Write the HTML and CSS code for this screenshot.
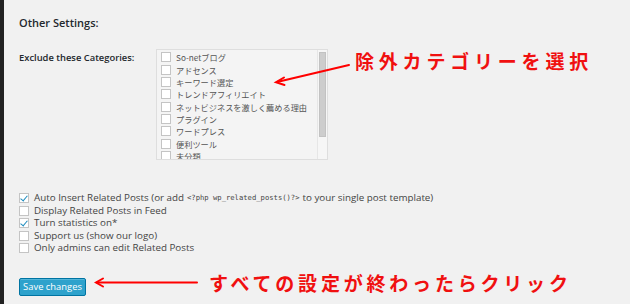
FILE: index.html
```html
<!DOCTYPE html>
<html lang="ja">
<head>
<meta charset="utf-8">
<link rel="stylesheet" href="styles.css">
</head>
<body>
<div class="page">
  <h3 class="title">Other Settings:</h3>
  <div class="row">
    <div class="label">Exclude these Categories:</div>
    <div class="catbox">
      <ul class="cats">
        <li><span class="cb"></span>So-netブログ</li>
        <li><span class="cb"></span>アドセンス</li>
        <li><span class="cb"></span>キーワード選定</li>
        <li><span class="cb"></span>トレンドアフィリエイト</li>
        <li><span class="cb"></span>ネットビジネスを激しく薦める理由</li>
        <li><span class="cb"></span>プラグイン</li>
        <li><span class="cb"></span>ワードプレス</li>
        <li><span class="cb"></span>便利ツール</li>
        <li><span class="cb"></span>未分類</li>
      </ul>
      <div class="scroll"><div class="thumb"></div></div>
    </div>
  </div>
  <ul class="opts">
    <li><span class="cb on"></span>Auto Insert Related Posts (or add <code>&lt;?php wp_related_posts()?&gt;</code> to your single post template)</li>
    <li><span class="cb"></span>Display Related Posts in Feed</li>
    <li><span class="cb on"></span>Turn statistics on*</li>
    <li><span class="cb"></span>Support us (show our logo)</li>
    <li><span class="cb"></span>Only admins can edit Related Posts</li>
  </ul>
  <button class="save">Save changes</button>

  <div class="note note1">除外カテゴリーを選択</div>
  <div class="note note2">すべての設定が終わったらクリック</div>
  <svg class="arrows" width="630" height="304" viewBox="0 0 630 304">
    <g stroke="#f00" stroke-width="2" fill="none" stroke-linecap="round">
      <line x1="349" y1="65" x2="277" y2="82"/>
      <polyline points="284,77.5 276,82.3 284.5,85"/>
      <line x1="197" y1="282.5" x2="97" y2="282.5"/>
      <polyline points="103,278.5 96,282.5 103,286.5"/>
    </g>
  </svg>
</div>
</body>
</html>
```
FILE: styles.css
```css
html, body {
  margin: 0;
  padding: 0;
}
body {
  background: #f1f1f1;
  font-family: "Open Sans", "Noto Sans CJK JP", sans-serif;
  color: #444;
}
.page {
  position: relative;
  width: 626px;
  height: 304px;
  border-left: 4px solid #222;
  padding-left: 15px;
  box-sizing: border-box;
  overflow: hidden;
}
.title {
  margin: 0;
  padding-top: 15px;
  font-size: 11px;
  line-height: 16px;
  font-weight: 600;
  color: #23282d;
}
.row {
  display: flex;
  margin-top: 18px;
}
.label {
  width: 137px;
  font-size: 9.4px;
  font-weight: 600;
  line-height: 14px;
  padding-top: 2px;
  color: #23282d;
}
.catbox {
  display: flex;
  width: 172px;
  height: 111px;
  box-sizing: border-box;
  border: 1px solid #dedede;
  background: #f4f4f4;
  overflow: hidden;
}
.cats {
  list-style: none;
  margin: 0;
  padding: 1px 0 0 4px;
  flex: 1;
  min-width: 0;
}
.cats li {
  display: flex;
  align-items: center;
  height: 12.35px;
  line-height: 12px;
  font-family: "Noto Sans CJK JP", sans-serif;
  font-size: 8.2px;
  color: #555;
  white-space: nowrap;
}
.cb {
  display: inline-block;
  flex: none;
  width: 10px;
  height: 10px;
  box-sizing: border-box;
  border: 1px solid #c4c4c4;
  background: #fff;
  margin-right: 5px;
  position: relative;
}
.cb.on::after {
  content: "";
  position: absolute;
  left: 2px;
  top: 0px;
  width: 3px;
  height: 6px;
  border-right: 1.6px solid #1e8cbe;
  border-bottom: 1.6px solid #1e8cbe;
  transform: rotate(40deg);
}
.scroll {
  width: 10px;
  flex: none;
  border-left: 1px solid #e6e6e6;
  background: #f6f6f6;
  padding: 2px 1px 0 1px;
  box-sizing: border-box;
}
.thumb {
  height: 85px;
  background: #cdcdcd;
  border: 1px solid #c2c2c2;
  box-sizing: border-box;
}
.opts {
  list-style: none;
  margin: 32px 0 0 0;
  padding: 0;
}
.opts li {
  display: flex;
  align-items: center;
  height: 12.5px;
  line-height: 12px;
  font-size: 9.8px;
  color: #444;
  white-space: nowrap;
}
.opts code {
  font-family: "DejaVu Sans Mono", monospace;
  font-size: 7.2px;
  margin: 0 3px;
  color: #444;
}
.save {
  display: block;
  margin-top: 23px;
  width: 67px;
  height: 18px;
  padding: 0;
  border: 1px solid #0074a2;
  border-radius: 2px;
  background: #2ea2cc;
  box-shadow: inset 0 1px 0 rgba(120, 200, 230, 0.5);
  color: #fff;
  font-family: "Open Sans", sans-serif;
  font-size: 9.4px;
  line-height: 16px;
}
.note {
  position: absolute;
  color: #f01010;
  font-family: "Noto Sans CJK JP", sans-serif;
  font-weight: 700;
  font-size: 19px;
  line-height: 22px;
  white-space: nowrap;
}
.note1 {
  left: 351px;
  top: 50px;
  letter-spacing: 4.8px;
}
.note2 {
  left: 205px;
  top: 272px;
  letter-spacing: 3.8px;
}
.arrows {
  position: absolute;
  left: -4px;
  top: 0;
  pointer-events: none;
}
```
